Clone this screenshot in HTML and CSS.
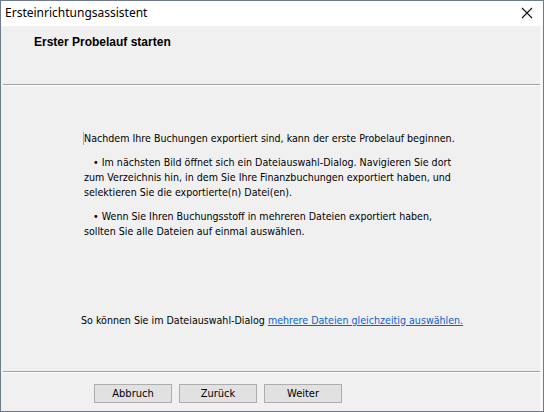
FILE: index.html
```html
<!DOCTYPE html>
<html lang="de">
<head>
<meta charset="utf-8">
<title>Ersteinrichtungsassistent</title>
<link rel="stylesheet" href="styles.css">
</head>
<body>
<div class="window">
  <div class="titlebar">
    <span class="title">Ersteinrichtungsassistent</span>
    <svg class="close" width="12" height="12" viewBox="0 0 12 12"><path d="M1 1 L11 11 M11 1 L1 11" stroke="#111" stroke-width="1.1" fill="none"/></svg>
  </div>
  <div class="frame">
    <div class="header">
      <h1 class="heading">Erster Probelauf starten</h1>
    </div>
    <div class="sep"></div>
    <div class="content">
      <p class="intro"><span class="caret"></span>Nachdem Ihre Buchungen exportiert sind, kann der erste Probelauf beginnen.</p>
      <p class="item">&nbsp;&nbsp;&nbsp;• Im nächsten Bild öffnet sich ein Dateiauswahl-Dialog. Navigieren Sie dort<br>zum Verzeichnis hin, in dem Sie Ihre Finanzbuchungen exportiert haben, und<br>selektieren Sie die exportierte(n) Datei(en).</p>
      <p class="item">&nbsp;&nbsp;&nbsp;• Wenn Sie Ihren Buchungsstoff in mehreren Dateien exportiert haben,<br>sollten Sie alle Dateien auf einmal auswählen.</p>
      <p class="hint">So können Sie im Dateiauswahl-Dialog <a class="link" href="#">mehrere Dateien gleichzeitig auswählen.</a></p>
    </div>
    <div class="sep"></div>
    <div class="footer">
      <button class="btn">Abbruch</button>
      <button class="btn">Zurück</button>
      <button class="btn">Weiter</button>
    </div>
  </div>
</div>
</body>
</html>
```
FILE: styles.css
```css
html, body {
  margin: 0;
  padding: 0;
  width: 544px;
  height: 412px;
  overflow: hidden;
  background: #ffffff;
}
.window {
  box-sizing: border-box;
  width: 544px;
  height: 412px;
  border: 1px solid #6f7b88;
  display: flex;
  flex-direction: column;
  background: #f8f8f8;
}
.titlebar {
  height: 25px;
  background: #ffffff;
  display: flex;
  align-items: center;
  justify-content: space-between;
  padding: 0 10px 0 4px;
  flex: none;
}
.title {
  font-family: "Noto Sans", "Open Sans", sans-serif;
  font-size: 12px;
  color: #000;
  position: relative;
  top: -1px;
}
.close {
  display: block;
  margin-top: -1px;
}
.frame {
  flex: 1;
  display: flex;
  flex-direction: column;
  background: #f0f0f0;
  margin-right: 3px;
}
.header {
  height: 58px;
  flex: none;
  padding: 0 0 0 33px;
}
.heading {
  margin: 0;
  padding-top: 9px;
  font-family: "Liberation Sans", Arial, sans-serif;
  font-weight: bold;
  font-size: 12px;
  color: #000;
}
.sep {
  height: 1px;
  border-bottom: 1px solid #ffffff;
  background: #a0a0a0;
  margin-left: 2px;
  flex: none;
}
.content {
  flex: 1;
  padding: 45px 0 0 83px;
  font-family: "DejaVu Sans Condensed", "DejaVu Sans", sans-serif;
  font-size: 10.6px;
  line-height: 15px;
  color: #000;
  display: flex;
  flex-direction: column;
}
.content p {
  margin: 0;
}
.intro {
  margin-bottom: 9px !important;
  position: relative;
}
.caret {
  position: absolute;
  left: -1px;
  top: 1px;
  width: 1px;
  height: 13px;
  background: #c9b14a;
}
.item {
  margin-bottom: 9px !important;
}
.hint {
  margin-top: auto !important;
  margin-bottom: 43px !important;
  margin-left: -3px !important;
}
.link {
  color: #0a64c8;
  text-decoration: underline;
}
.footer {
  box-sizing: border-box;
  height: 38px;
  flex: none;
  display: flex;
  align-items: flex-start;
  padding: 11px 0 0 93px;
  gap: 7px;
}
.btn {
  width: 78px;
  height: 19px;
  box-sizing: border-box;
  border: 1px solid #adadad;
  background: #e1e1e1;
  font-family: "DejaVu Sans Condensed", "DejaVu Sans", sans-serif;
  font-size: 11px;
  color: #000;
  padding: 0;
  margin: 0;
}
```
